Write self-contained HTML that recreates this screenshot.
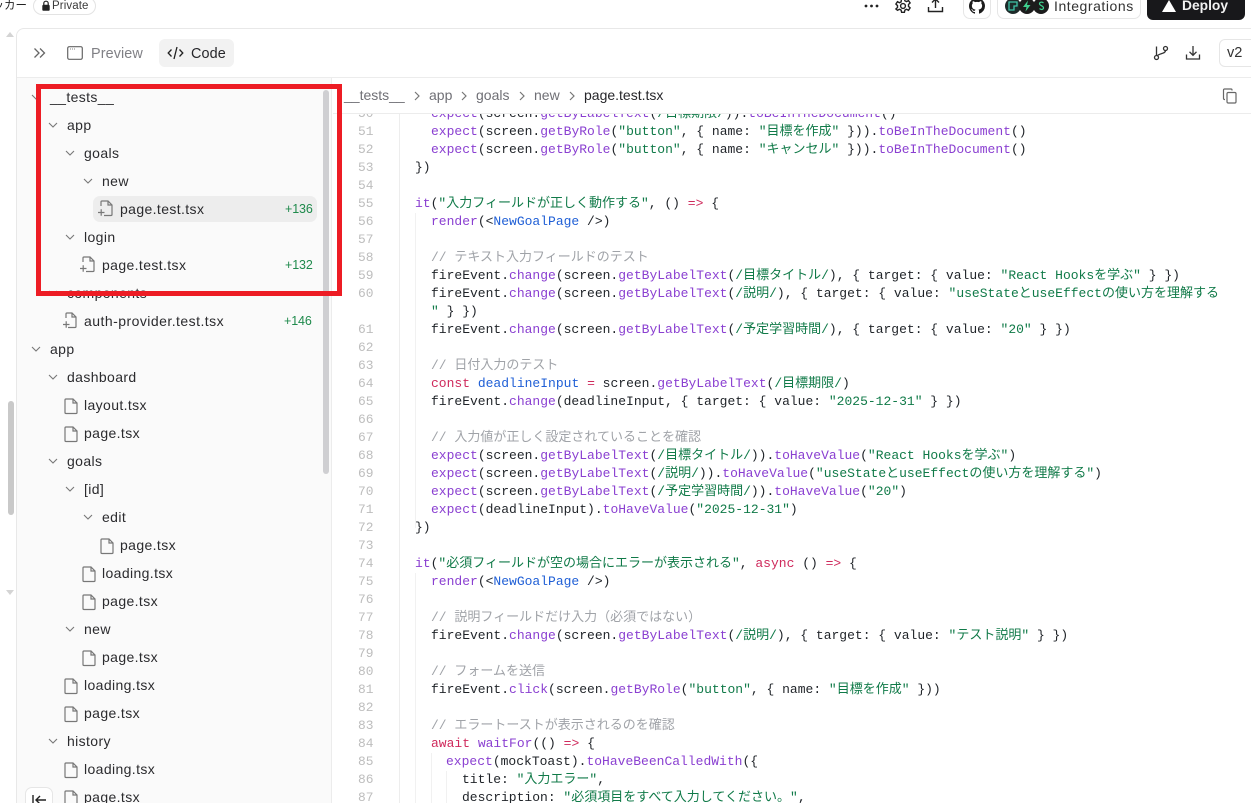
<!DOCTYPE html>
<html lang="ja"><head><meta charset="utf-8"><title>Code</title>
<style>
*{box-sizing:border-box}
html,body{margin:0;padding:0;width:1251px;height:803px;overflow:hidden;background:#fff;font-family:"Liberation Sans","Noto Sans CJK JP",sans-serif;color:#18181b}
#root{position:relative;width:1251px;height:803px;overflow:hidden}
.a{position:absolute}
#panel{left:16px;top:28px;width:1260px;height:790px;border:1px solid #e8e8e8;border-radius:8px;background:#fff}
#tree{left:17px;top:78px;width:315px;height:725px;background:#fafafa;border-right:1px solid #ececec;overflow:hidden}
.r{position:absolute;height:28px;line-height:29px;font-size:14px;letter-spacing:.38px;color:#2b2b2e;white-space:nowrap}
.add{position:absolute;font-size:12.5px;color:#1f8a4c;line-height:29px;height:28px;letter-spacing:-.1px}
#code{left:333px;top:113px;width:918px;height:690px;overflow:hidden;border-top:1px solid #ececec;background:#fff}
.l{position:absolute;left:82px;height:18px;line-height:18px;font-family:"Liberation Mono","Noto Sans CJK JP",monospace;font-size:13px;white-space:pre;color:#1f2328}
.n{position:absolute;left:25px;width:16px;height:18px;line-height:18px;font-family:"Liberation Mono",monospace;font-size:12.88px;color:#bdbdbd}
.f{color:#8a3fd1}.s{color:#107a48}.k{color:#cf2a5c}.c{color:#a0a3a8}.v{color:#1f5fd6}
.ig{position:absolute;width:1px;background:#f1f1f1}
.bc{position:absolute;top:87px;font-size:14px;line-height:16px;color:#6f6f75;white-space:nowrap}
</style></head><body><div id="root">

<!-- top bar -->
<div class="a" style="left:-7.500px;top:-2px;font-size:11.500px;line-height:16px;color:#222">ッカー</div>
<div class="a" style="left:33px;top:-3px;width:63px;height:18px;border:1px solid #e3e3e3;border-radius:9px;font-size:11.5px;line-height:17px;padding-left:18px;color:#3a3a3a;letter-spacing:.1px">Private
<svg class="a" style="left:7px;top:2px" width="10" height="12" viewBox="0 0 10 12"><path d="M2.800 5V3.400a2.200 2.200 0 0 1 4.400 0V5" fill="none" stroke="#222" stroke-width="1.200"/><rect x="1.300" y="4.800" width="7.400" height="6" rx="1.300" fill="#222"/></svg></div>

<svg class="a" style="left:864px;top:3px" width="15" height="6"><circle cx="2" cy="3" r="1.400" fill="#222"/><circle cx="7.500" cy="3" r="1.400" fill="#222"/><circle cx="13" cy="3" r="1.400" fill="#222"/></svg>
<svg class="a" style="left:894px;top:-3px" width="18" height="18" viewBox="0 0 18 18" fill="none" stroke="#222" stroke-width="1.400"><circle cx="9" cy="9" r="2.400"/><path d="M7.600 1.600h2.800l.5 2.200 1.600.8 2-1 1.600 2.300-1.600 1.600v1.900l1.600 1.500-1.600 2.400-2-1-1.600.8-.5 2.200H7.600l-.5-2.200-1.600-.8-2 1L1.900 12l1.600-1.500V8.600L1.900 7l1.600-2.300 2 1 1.600-.8z"/></svg>
<svg class="a" style="left:927px;top:-2px" width="17" height="17" viewBox="0 0 17 17" fill="none" stroke="#222" stroke-width="1.400"><path d="M8.500 10V1.500M5 4.500l3.500-3.500L12 4.500M1.500 9v4.500h14V9"/></svg>

<div class="a" style="left:963px;top:-8px;width:28px;height:27px;border:1px solid #e6e6e6;border-radius:7px"></div>
<svg class="a" style="left:969px;top:-2px" width="16" height="16" viewBox="0 0 16 16"><path fill="#1b1b1b" d="M8 0C3.580 0 0 3.580 0 8c0 3.540 2.290 6.530 5.470 7.590.4.070.55-.17.55-.38v-1.340c-2.230.48-2.700-1.070-2.700-1.070-.36-.93-.89-1.170-.89-1.170-.73-.5.05-.49.05-.49.8.060 1.220.82 1.220.82.720 1.220 1.870.870 2.330.660.070-.520.280-.870.510-1.070-1.780-.200-3.640-.890-3.640-3.950 0-.870.310-1.590.820-2.150-.080-.200-.360-1.020.080-2.120 0 0 .670-.210 2.200.820a7.660 7.660 0 0 1 4 0c1.530-1.040 2.200-.820 2.200-.820.440 1.100.160 1.920.080 2.120.510.560.820 1.270.820 2.150 0 3.070-1.870 3.750-3.650 3.950.290.250.540.730.540 1.480v2.200c0 .210.150.460.550.380A8.010 8.010 0 0 0 16 8c0-4.420-3.580-8-8-8z"/></svg>

<div class="a" style="left:997px;top:-8px;width:144px;height:27px;border:1px solid #e6e6e6;border-radius:7px"></div>
<svg class="a" style="left:1005px;top:-3px" width="45" height="18" viewBox="0 0 45 18">
<circle cx="8" cy="9" r="8" fill="#1d2b2a"/><path d="M4 5h8v4h-3v4H4z" fill="none" stroke="#3fc3a8" stroke-width="1.300"/>
<circle cx="22" cy="9" r="8" fill="#1c1c1c"/><path d="M23 3.500l-5 6.500h3.500l-1 4.500 5-6.500H22z" fill="#3ecf8e"/>
<circle cx="36" cy="9" r="8" fill="#1c1c1c"/><path d="M38.500 6c-1.500-1.500-4-1-4 .8s4 2 4 4-2.500 2.200-4 .8" fill="none" stroke="#3ecf8e" stroke-width="1.200"/></svg>
<div class="a" style="left:1054px;top:-2px;font-size:14px;line-height:16px;color:#333;letter-spacing:.55px">Integrations</div>

<div class="a" style="left:1147px;top:-8px;width:98px;height:28px;background:#18181b;border-radius:6px"></div>
<svg class="a" style="left:1162px;top:0" width="14" height="12"><path d="M7 0l7 12H0z" fill="#fff"/></svg>
<div class="a" style="left:1182px;top:-2px;font-size:13.8px;font-weight:700;line-height:16px;color:#f2f2f2">Deploy</div>

<!-- outer scrollbar -->
<svg class="a" style="left:6px;top:32px" width="8" height="5"><path d="M4 0l4 5H0z" fill="#d4d4d4"/></svg>
<svg class="a" style="left:6px;top:590px" width="8" height="5"><path d="M4 5l4-5H0z" fill="#d4d4d4"/></svg>
<div class="a" style="left:8px;top:401px;width:6px;height:114px;background:#c9c9c9;border-radius:3px"></div>

<div class="a" id="panel"></div>

<!-- panel header -->
<svg class="a" style="left:33px;top:47px" width="13" height="12" viewBox="0 0 13 12" fill="none" stroke="#666" stroke-width="1.300"><path d="M1.500 1.500L6 6l-4.500 4.500M7 1.500L11.500 6 7 10.500"/></svg>
<svg class="a" style="left:67px;top:46px" width="16" height="14" viewBox="0 0 16 14" fill="none" stroke="#666" stroke-width="1.200"><rect x=".7" y=".7" width="14.600" height="12.600" rx="1.500"/><path d="M3 3h.8M5 3h.8M7 3h.8" stroke-width="1"/></svg>
<div class="a" style="left:91px;top:46px;font-size:14.4px;line-height:16px;color:#808085;letter-spacing:.1px">Preview</div>
<div class="a" style="left:159px;top:39px;width:75px;height:28px;background:#f2f2f2;border-radius:6px"></div>
<svg class="a" style="left:167px;top:46px" width="17" height="14" viewBox="0 0 17 14" fill="none" stroke="#222" stroke-width="1.300"><path d="M4.500 3.500L1.200 7l3.300 3.500M12.500 3.500L15.800 7l-3.300 3.500M10 1L7 13"/></svg>
<div class="a" style="left:191px;top:46px;font-size:14.4px;line-height:16px;color:#26262a;letter-spacing:.1px">Code</div>

<svg class="a" style="left:1153px;top:45px" width="16" height="16" viewBox="0 0 16 16" fill="none" stroke="#333" stroke-width="1.300"><circle cx="3.500" cy="12.500" r="2"/><circle cx="12.500" cy="3.500" r="2"/><path d="M3.500 10.500V1.500M12.500 5.500C12.500 9 6.500 8 4 11"/></svg>
<svg class="a" style="left:1185px;top:45px" width="16" height="16" viewBox="0 0 16 16" fill="none" stroke="#333" stroke-width="1.300"><path d="M8 1v9M4.500 6.800L8 10.300l3.500-3.500M1.500 9.500v4.500h13V9.500"/></svg>
<div class="a" style="left:1219px;top:39px;width:50px;height:28px;border:1px solid #e6e6e6;border-radius:6px;font-size:14.6px;line-height:27px;padding-left:7px;color:#333">v2</div>

<div class="a" style="left:17px;top:77px;width:1234px;height:1px;background:#ececec"></div>

<!-- tree -->
<div class="a" id="tree">
 <div class="a" style="left:76px;top:118px;width:224px;height:26px;background:#ededed;border-radius:7px"></div>
 <div class="r" style="left:33px;top:5px">__tests__</div>
 <div class="r" style="left:50px;top:33px">app</div>
 <div class="r" style="left:67px;top:61px">goals</div>
 <div class="r" style="left:85px;top:89px">new</div>
 <div class="r" style="left:103px;top:117px">page.test.tsx</div><div class="add" style="left:268px;top:117px">+136</div>
 <div class="r" style="left:67px;top:145px">login</div>
 <div class="r" style="left:85px;top:173px">page.test.tsx</div><div class="add" style="left:268px;top:173px">+132</div>
 <div class="r" style="left:50px;top:201px">components</div>
 <div class="r" style="left:67px;top:229px;letter-spacing:.46px">auth-provider.test.tsx</div><div class="add" style="left:267px;top:229px">+146</div>
 <div class="r" style="left:33px;top:257px">app</div>
 <div class="r" style="left:50px;top:285px">dashboard</div>
 <div class="r" style="left:67px;top:313px">layout.tsx</div>
 <div class="r" style="left:67px;top:341px">page.tsx</div>
 <div class="r" style="left:50px;top:369px">goals</div>
 <div class="r" style="left:67px;top:397px">[id]</div>
 <div class="r" style="left:85px;top:425px">edit</div>
 <div class="r" style="left:103px;top:453px">page.tsx</div>
 <div class="r" style="left:85px;top:481px">loading.tsx</div>
 <div class="r" style="left:85px;top:509px">page.tsx</div>
 <div class="r" style="left:67px;top:537px">new</div>
 <div class="r" style="left:85px;top:565px">page.tsx</div>
 <div class="r" style="left:67px;top:593px">loading.tsx</div>
 <div class="r" style="left:67px;top:621px">page.tsx</div>
 <div class="r" style="left:50px;top:649px">history</div>
 <div class="r" style="left:67px;top:677px">loading.tsx</div>
 <div class="r" style="left:67px;top:705px">page.tsx</div>

 <svg class="a" style="left:0;top:0" width="315" height="725" fill="none" stroke="#777" stroke-width="1.100">
  <path d="M15 17l4 4 4-4M32 45l4 4 4-4M49 73l4 4 4-4M67 101l4 4 4-4M49 157l4 4 4-4M32 213l4 4 4-4M15 269l4 4 4-4M32 297l4 4 4-4M32 381l4 4 4-4M49 409l4 4 4-4M67 437l4 4 4-4M49 549l4 4 4-4M32 661l4 4 4-4"/>
  <g stroke-width="1.200" transform="translate(0 1)">
   <path d="M50 320h6l4 4v9.500a1 1 0 0 1-1 1h-10a1 1 0 0 1-1-1V321a1 1 0 0 1 1-1zM56 320v4h4"/>
   <path d="M50 348h6l4 4v9.500a1 1 0 0 1-1 1h-10a1 1 0 0 1-1-1V349a1 1 0 0 1 1-1zM56 348v4h4"/>
   <path d="M86 460h6l4 4v9.500a1 1 0 0 1-1 1h-10a1 1 0 0 1-1-1V461a1 1 0 0 1 1-1zM92 460v4h4"/>
   <path d="M68 488h6l4 4v9.500a1 1 0 0 1-1 1h-10a1 1 0 0 1-1-1V489a1 1 0 0 1 1-1zM74 488v4h4"/>
   <path d="M68 516h6l4 4v9.500a1 1 0 0 1-1 1h-10a1 1 0 0 1-1-1V517a1 1 0 0 1 1-1zM74 516v4h4"/>
   <path d="M68 572h6l4 4v9.500a1 1 0 0 1-1 1h-10a1 1 0 0 1-1-1V573a1 1 0 0 1 1-1zM74 572v4h4"/>
   <path d="M50 600h6l4 4v9.500a1 1 0 0 1-1 1h-10a1 1 0 0 1-1-1V601a1 1 0 0 1 1-1zM56 600v4h4"/>
   <path d="M50 628h6l4 4v9.500a1 1 0 0 1-1 1h-10a1 1 0 0 1-1-1V629a1 1 0 0 1 1-1zM56 628v4h4"/>
   <path d="M50 684h6l4 4v9.500a1 1 0 0 1-1 1h-10a1 1 0 0 1-1-1V685a1 1 0 0 1 1-1zM56 684v4h4"/>
   <path d="M50 712h6l4 4v9.500a1 1 0 0 1-1 1h-10a1 1 0 0 1-1-1V713a1 1 0 0 1 1-1zM56 712v4h4"/>
   <path d="M84 127v-4a1 1 0 0 1 1-1h6l4 4v9.500a1 1 0 0 1-1 1h-7M91 122v4h4M81 133.500h6.500M84.200 130.200v6.600"/>
   <path d="M66 183v-4a1 1 0 0 1 1-1h6l4 4v9.500a1 1 0 0 1-1 1h-7M73 178v4h4M63 189.500h6.500M66.200 186.200v6.600"/>
   <path d="M49 239v-4a1 1 0 0 1 1-1h5l4 4v9.500a1 1 0 0 1-1 1h-7M55 234v4h4M46 245.500h6.500M49.200 242.200v6.600"/>
  </g>
 </svg>
 <div class="a" style="left:306px;top:12px;width:6px;height:384px;background:#cfcfd2;border-radius:3px"></div>
</div>

<!-- collapse button -->
<div class="a" style="left:25px;top:787px;width:28px;height:28px;border:1px solid #e6e6e6;border-radius:7px;background:#fff"></div>
<svg class="a" style="left:32px;top:795px" width="16" height="10" viewBox="0 0 16 10" fill="none" stroke="#222" stroke-width="1.400"><path d="M1 0v10M14 5H4M8 1L4 5l4 4"/></svg>

<!-- breadcrumb -->
<div class="bc" style="left:344px">__tests__</div>
<div class="bc" style="left:429px">app</div>
<div class="bc" style="left:476px">goals</div>
<div class="bc" style="left:534px">new</div>
<div class="bc" style="left:584px;color:#26262a">page.test.tsx</div>
<svg class="a" style="left:0;top:0" width="600" height="110" fill="none" stroke="#777" stroke-width="1.200"><path d="M415 92l4 4-4 4M462 92l4 4-4 4M520 92l4 4-4 4M570 92l4 4-4 4"/></svg>
<svg class="a" style="left:1222px;top:88px" width="16" height="16" viewBox="0 0 16 16" fill="none" stroke="#666" stroke-width="1.200"><rect x="5" y="4.500" width="9" height="10.500" rx="1.200"/><path d="M3 11.500H2.500a1 1 0 0 1-1-1V2a1 1 0 0 1 1-1H9a1 1 0 0 1 1 1v.5"/></svg>

<!-- code -->
<div class="a" id="code">
 <div class="a" style="left:66px;top:0;width:1px;height:690px;background:#ededed"></div>
 <div class="ig" style="left:82px;top:99px;height:315px"></div>
 <div class="ig" style="left:82px;top:459px;height:231px"></div>
 <div class="ig" style="left:98px;top:639px;height:51px"></div>
 <div class="ig" style="left:113px;top:657px;height:33px"></div>

 <div class="n" style="top:-9px">50</div><div class="l" style="left:98px;top:-9px"><span class="f">expect</span>(screen.<span class="f">getByLabelText</span>(<span class="s">/目標期限/</span>)).<span class="f">toBeInTheDocument</span>()</div>
 <div class="n" style="top:9px">51</div><div class="l" style="left:98px;top:9px"><span class="f">expect</span>(screen.<span class="f">getByRole</span>(<span class="s">"button"</span>, { name: <span class="s">"目標を作成"</span> })).<span class="f">toBeInTheDocument</span>()</div>
 <div class="n" style="top:27px">52</div><div class="l" style="left:98px;top:27px"><span class="f">expect</span>(screen.<span class="f">getByRole</span>(<span class="s">"button"</span>, { name: <span class="s">"キャンセル"</span> })).<span class="f">toBeInTheDocument</span>()</div>
 <div class="n" style="top:45px">53</div><div class="l" style="top:45px">})</div>
 <div class="n" style="top:63px">54</div>
 <div class="n" style="top:81px">55</div><div class="l" style="top:81px"><span class="f">it</span>(<span class="s">"入力フィールドが正しく動作する"</span>, () <span class="k">=&gt;</span> {</div>
 <div class="n" style="top:99px">56</div><div class="l" style="left:98px;top:99px"><span class="f">render</span>(&lt;<span class="v">NewGoalPage</span> /&gt;)</div>
 <div class="n" style="top:117px">57</div>
 <div class="n" style="top:135px">58</div><div class="l c" style="left:98px;top:135px">// テキスト入力フィールドのテスト</div>
 <div class="n" style="top:153px">59</div><div class="l" style="left:98px;top:153px">fireEvent.<span class="f">change</span>(screen.<span class="f">getByLabelText</span>(<span class="s">/目標タイトル/</span>), { target: { value: <span class="s">"React Hooksを学ぶ"</span> } })</div>
 <div class="n" style="top:171px">60</div><div class="l" style="left:98px;top:171px">fireEvent.<span class="f">change</span>(screen.<span class="f">getByLabelText</span>(<span class="s">/説明/</span>), { target: { value: <span class="s">"useStateとuseEffectの使い方を理解する</span></div>
 <div class="l" style="left:98px;top:189px"><span class="s">"</span> } })</div>
 <div class="n" style="top:207px">61</div><div class="l" style="left:98px;top:207px">fireEvent.<span class="f">change</span>(screen.<span class="f">getByLabelText</span>(<span class="s">/予定学習時間/</span>), { target: { value: <span class="s">"20"</span> } })</div>
 <div class="n" style="top:225px">62</div>
 <div class="n" style="top:243px">63</div><div class="l c" style="left:98px;top:243px">// 日付入力のテスト</div>
 <div class="n" style="top:261px">64</div><div class="l" style="left:98px;top:261px"><span class="k">const</span> <span class="v">deadlineInput</span> <span class="k">=</span> screen.<span class="f">getByLabelText</span>(<span class="s">/目標期限/</span>)</div>
 <div class="n" style="top:279px">65</div><div class="l" style="left:98px;top:279px">fireEvent.<span class="f">change</span>(deadlineInput, { target: { value: <span class="s">"2025-12-31"</span> } })</div>
 <div class="n" style="top:297px">66</div>
 <div class="n" style="top:315px">67</div><div class="l c" style="left:98px;top:315px">// 入力値が正しく設定されていることを確認</div>
 <div class="n" style="top:333px">68</div><div class="l" style="left:98px;top:333px"><span class="f">expect</span>(screen.<span class="f">getByLabelText</span>(<span class="s">/目標タイトル/</span>)).<span class="f">toHaveValue</span>(<span class="s">"React Hooksを学ぶ"</span>)</div>
 <div class="n" style="top:351px">69</div><div class="l" style="left:98px;top:351px"><span class="f">expect</span>(screen.<span class="f">getByLabelText</span>(<span class="s">/説明/</span>)).<span class="f">toHaveValue</span>(<span class="s">"useStateとuseEffectの使い方を理解する"</span>)</div>
 <div class="n" style="top:369px">70</div><div class="l" style="left:98px;top:369px"><span class="f">expect</span>(screen.<span class="f">getByLabelText</span>(<span class="s">/予定学習時間/</span>)).<span class="f">toHaveValue</span>(<span class="s">"20"</span>)</div>
 <div class="n" style="top:387px">71</div><div class="l" style="left:98px;top:387px"><span class="f">expect</span>(deadlineInput).<span class="f">toHaveValue</span>(<span class="s">"2025-12-31"</span>)</div>
 <div class="n" style="top:405px">72</div><div class="l" style="top:405px">})</div>
 <div class="n" style="top:423px">73</div>
 <div class="n" style="top:441px">74</div><div class="l" style="top:441px"><span class="f">it</span>(<span class="s">"必須フィールドが空の場合にエラーが表示される"</span>, <span class="k">async</span> () <span class="k">=&gt;</span> {</div>
 <div class="n" style="top:459px">75</div><div class="l" style="left:98px;top:459px"><span class="f">render</span>(&lt;<span class="v">NewGoalPage</span> /&gt;)</div>
 <div class="n" style="top:477px">76</div>
 <div class="n" style="top:495px">77</div><div class="l c" style="left:98px;top:495px">// 説明フィールドだけ入力（必須ではない）</div>
 <div class="n" style="top:513px">78</div><div class="l" style="left:98px;top:513px">fireEvent.<span class="f">change</span>(screen.<span class="f">getByLabelText</span>(<span class="s">/説明/</span>), { target: { value: <span class="s">"テスト説明"</span> } })</div>
 <div class="n" style="top:531px">79</div>
 <div class="n" style="top:549px">80</div><div class="l c" style="left:98px;top:549px">// フォームを送信</div>
 <div class="n" style="top:567px">81</div><div class="l" style="left:98px;top:567px">fireEvent.<span class="f">click</span>(screen.<span class="f">getByRole</span>(<span class="s">"button"</span>, { name: <span class="s">"目標を作成"</span> }))</div>
 <div class="n" style="top:585px">82</div>
 <div class="n" style="top:603px">83</div><div class="l c" style="left:98px;top:603px">// エラートーストが表示されるのを確認</div>
 <div class="n" style="top:621px">84</div><div class="l" style="left:98px;top:621px"><span class="k">await</span> <span class="f">waitFor</span>(() <span class="k">=&gt;</span> {</div>
 <div class="n" style="top:639px">85</div><div class="l" style="left:113px;top:639px"><span class="f">expect</span>(mockToast).<span class="f">toHaveBeenCalledWith</span>({</div>
 <div class="n" style="top:657px">86</div><div class="l" style="left:129px;top:657px">title: <span class="s">"入力エラー"</span>,</div>
 <div class="n" style="top:675px">87</div><div class="l" style="left:129px;top:675px">description: <span class="s">"必須項目をすべて入力してください。"</span>,</div>
</div>

<!-- red annotation rectangle -->
<div class="a" style="left:36px;top:84px;width:306px;height:212px;border:5px solid #ed1c24"></div>
</div></body></html>
